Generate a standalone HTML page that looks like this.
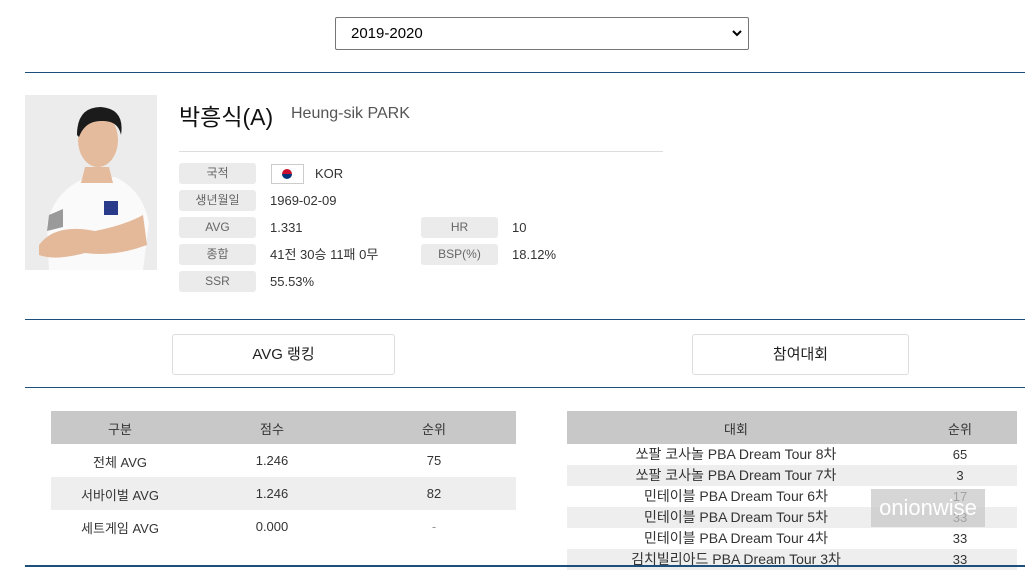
<!DOCTYPE html>
<html><head><meta charset="utf-8"><style>
*{margin:0;padding:0;box-sizing:border-box}
body{width:1025px;height:567px;overflow:hidden;background:#fff;font-family:"Liberation Sans","Noto Sans CJK KR",sans-serif;color:#333;position:relative}
.a{position:absolute}
.sel{left:335px;top:17px;width:414px;height:33px;border:1px solid #767676;border-radius:2px;font-size:15px;color:#000;padding:7px 0 0 15px}
.hl{height:1px;background:#1d4f7c}
.lab{left:179px;width:77px;height:21px;background:#ebebeb;border-radius:3px;font-size:12px;color:#666;text-align:center;line-height:21px}
.val{font-size:13px;color:#333;line-height:21px}
.btn{height:41px;border:1px solid #ddd;border-radius:3px;text-align:center;line-height:40px;font-size:15px;color:#222}
.t{font-size:13px;text-align:center;color:#333}
</style></head><body>
<div class="a sel">2019-2020<svg style="position:absolute;right:6px;top:11px" width="10" height="8" viewBox="0 0 10 8"><path d="M1 2 L5 6 L9 2" stroke="#000" stroke-width="2" fill="none"/></svg></div>
<div class="a hl" style="left:25px;top:72px;width:1000px"></div>
<svg class="a" style="left:25px;top:95px" width="132" height="175" viewBox="0 0 132 175">
<rect width="132" height="175" fill="#ececec"/>
<path d="M24 175 L22 130 Q28 98 58 84 L90 82 Q118 95 124 128 L118 175Z" fill="#fafafa"/>
<path d="M24 120 L38 114 L38 132 L22 136Z" fill="#9a9a9a"/>
<path d="M14 150 Q30 128 70 136 Q100 130 118 120 L122 150 Q90 162 60 158 Q30 166 14 160Z" fill="#e3b99a"/>
<path d="M60 72 L84 72 L88 88 L56 88Z" fill="#e4bb9c"/>
<ellipse cx="73" cy="45" rx="20" ry="27" fill="#e4bb9c"/>
<path d="M52 40 Q52 12 76 12 Q100 14 96 40 Q93 25 76 26 Q60 26 54 42Z" fill="#1b1b1b"/>
<rect x="79" y="106" width="14" height="14" fill="#2a3a8a"/>
</svg>
<div class="a" style="left:179px;top:98px;font-size:23px;color:#111">박흥식(A)</div>
<div class="a" style="left:291px;top:105px;font-size:16px;color:#555">Heung-sik PARK</div>
<div class="a" style="left:179px;top:151px;width:484px;height:1px;background:#ddd"></div>
<div class="a lab" style="top:163px">국적</div>
<div class="a lab" style="top:190px">생년월일</div>
<div class="a lab" style="top:217px">AVG</div>
<div class="a lab" style="top:244px">종합</div>
<div class="a lab" style="top:271px">SSR</div>
<div class="a lab" style="left:421px;top:217px">HR</div>
<div class="a lab" style="left:421px;top:244px">BSP(%)</div>
<div class="a" style="left:271px;top:164px;width:33px;height:20px;border:1px solid #ccc;background:#fff"><div style="position:absolute;left:10px;top:4px;width:10px;height:10px;border-radius:50%;background:linear-gradient(#c8102e 50%,#003478 50%)"></div></div>
<div class="a val" style="left:315px;top:163px">KOR</div>
<div class="a val" style="left:270px;top:190px">1969-02-09</div>
<div class="a val" style="left:270px;top:217px">1.331</div>
<div class="a val" style="left:270px;top:244px">41전 30승 11패 0무</div>
<div class="a val" style="left:270px;top:271px">55.53%</div>
<div class="a val" style="left:512px;top:217px">10</div>
<div class="a val" style="left:512px;top:244px">18.12%</div>
<div class="a hl" style="left:25px;top:319px;width:1000px"></div>
<div class="a btn" style="left:172px;top:334px;width:223px">AVG 랭킹</div>
<div class="a btn" style="left:692px;top:334px;width:217px">참여대회</div>
<div class="a hl" style="left:25px;top:387px;width:1000px"></div>
<div class="a" style="left:51px;top:411px;width:465px;height:33px;background:#c8c8c8"></div>
<div class="a" style="left:51px;top:477px;width:465px;height:33px;background:#eee"></div>
<div class="a t" style="left:70px;width:100px;top:419px">구분</div>
<div class="a t" style="left:222px;width:100px;top:419px">점수</div>
<div class="a t" style="left:384px;width:100px;top:419px">순위</div>
<div class="a t" style="left:50px;width:140px;top:452px">전체 AVG</div>
<div class="a t" style="left:222px;width:100px;top:453px">1.246</div>
<div class="a t" style="left:384px;width:100px;top:453px">75</div>
<div class="a t" style="left:50px;width:140px;top:485px">서바이벌 AVG</div>
<div class="a t" style="left:222px;width:100px;top:486px">1.246</div>
<div class="a t" style="left:384px;width:100px;top:486px">82</div>
<div class="a t" style="left:50px;width:140px;top:518px">세트게임 AVG</div>
<div class="a t" style="left:222px;width:100px;top:519px">0.000</div>
<div class="a t" style="left:384px;width:100px;top:519px;color:#999">-</div>
<div class="a" style="left:567px;top:411px;width:450px;height:33px;background:#c8c8c8"></div>
<div class="a t" style="left:686px;width:100px;top:419px">대회</div>
<div class="a t" style="left:910px;width:100px;top:419px">순위</div>
<div class="a" style="left:567px;top:444px;width:450px;font-size:14px;color:#333;line-height:21px">
<div style="display:flex"><span style="width:338px;text-align:center">쏘팔 코사놀 PBA Dream Tour 8차</span><span style="width:110px;text-align:center;font-size:13px">65</span></div>
<div style="display:flex;background:#eee"><span style="width:338px;text-align:center">쏘팔 코사놀 PBA Dream Tour 7차</span><span style="width:110px;text-align:center;font-size:13px">3</span></div>
<div style="display:flex"><span style="width:338px;text-align:center">민테이블 PBA Dream Tour 6차</span><span style="width:110px;text-align:center;font-size:13px">17</span></div>
<div style="display:flex;background:#eee"><span style="width:338px;text-align:center">민테이블 PBA Dream Tour 5차</span><span style="width:110px;text-align:center;font-size:13px">33</span></div>
<div style="display:flex"><span style="width:338px;text-align:center">민테이블 PBA Dream Tour 4차</span><span style="width:110px;text-align:center;font-size:13px">33</span></div>
<div style="display:flex;background:#eee"><span style="width:338px;text-align:center">김치빌리아드 PBA Dream Tour 3차</span><span style="width:110px;text-align:center;font-size:13px">33</span></div>
</div>
<div class="a" style="left:871px;top:489px;width:114px;height:38px;background:rgba(200,200,200,.75);color:#fff;font-size:22px;line-height:38px;text-align:center">onionwise</div>
<div class="a hl" style="left:25px;top:565px;width:1000px;height:2px"></div>
</body></html>
